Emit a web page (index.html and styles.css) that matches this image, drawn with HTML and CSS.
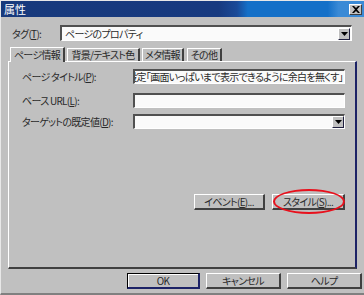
FILE: index.html
```html
<!DOCTYPE html>
<html lang="ja">
<head>
<meta charset="utf-8">
<link rel="stylesheet" href="styles.css">
</head>
<body>
<div class="window">
  <div class="titlebar">
    <span class="title">属性</span>
    <span class="close"><svg width="8" height="7" viewBox="0 0 8 7"><path d="M0 0h2l2 2 2-2h2L5 3.5 8 7H6L4 5 2 7H0l3-3.5z" fill="#000"/></svg></span>
  </div>
  <div class="tagrow">
    <span class="label">タグ(<u>T</u>):</span>
    <div class="select wide">
      <span class="val">ページのプロパティ</span>
      <span class="arrow"><svg width="7" height="4" viewBox="0 0 7 4"><path d="M0 0h7L3.5 4z" fill="#000"/></svg></span>
    </div>
  </div>
  <div class="tabs">
    <span class="tab active t1">ページ情報</span>
    <span class="tab t2">背景/テキスト色</span>
    <span class="tab t3">メタ情報</span>
    <span class="tab t4">その他</span>
  </div>
  <div class="panel">
    <div class="row">
      <span class="flabel">ページ タイトル(<u>P</u>):</span>
      <div class="field scroll"><span>設定「画面いっぱいまで表示できるように余白を無くす」</span></div>
    </div>
    <div class="row r2">
      <span class="flabel">ベース URL(<u>L</u>):</span>
      <div class="field"></div>
    </div>
    <div class="row r3">
      <span class="flabel">ターゲットの既定値(<u>D</u>):</span>
      <div class="select field">
        <span class="val"></span>
        <span class="arrow"><svg width="7" height="4" viewBox="0 0 7 4"><path d="M0 0h7L3.5 4z" fill="#000"/></svg></span>
      </div>
    </div>
    <div class="panelbtns">
      <span class="btn ev">イベント(<u>E</u>)...</span>
      <span class="btn st">スタイル(<u>S</u>)...<span class="ring"></span></span>
    </div>
  </div>
  <div class="footer">
    <span class="btn def">OK</span>
    <span class="btn fb">キャンセル</span>
    <span class="btn fb">ヘルプ</span>
  </div>
</div>
</body>
</html>
```
FILE: styles.css
```css
* { box-sizing: border-box; }
html, body { margin: 0; padding: 0; }
body {
  width: 364px;
  height: 295px;
  background: #c0c0c0;
  font-family: "Noto Sans CJK JP", "Noto Sans", sans-serif;
  font-size: 10px;
  letter-spacing: -0.7px;
  font-feature-settings: "palt";
  color: #2a2a2a;
  overflow: hidden;
}
u { text-decoration: underline; text-underline-offset: 1px; }
.window {
  width: 364px;
  height: 295px;
  border-top: 1px solid #e8e8e8;
  border-left: 1px solid #e8e8e8;
  border-bottom: 2px solid #808080;
  position: relative;
}
.titlebar {
  height: 16px;
  display: flex;
  align-items: center;
  justify-content: space-between;
  padding: 0 2px 0 3px;
  background: linear-gradient(to right, #183a7c 0%, #173a80 60%, #1a4a98 65%, #1470c8 68%, #1470c8 90%, #3a8ad6 93%, #3a8ad6 100%);
  color: #fff;
}
.title { font-size: 11px; line-height: 16px; letter-spacing: 0; }
.close {
  width: 13px;
  height: 11px;
  background: #c0c0c0;
  border-top: 1px solid #fff;
  border-left: 1px solid #fff;
  border-right: 1px solid #404040;
  border-bottom: 1px solid #404040;
  display: flex;
  align-items: center;
  justify-content: center;
}
.tagrow {
  margin-top: 8px;
  padding-left: 11px;
  display: flex;
  align-items: center;
  height: 16px;
}
.label { width: 48px; }
.select {
  display: flex;
  align-items: center;
  justify-content: space-between;
  background: #fafafa;
  border-top: 2px solid #505050;
  border-left: 2px solid #505050;
  border-right: 1px solid #fff;
  border-bottom: 1px solid #fff;
}
.select.wide { width: 292px; height: 16px; }
.select .val { padding-left: 3px; line-height: 12px; }
.arrow {
  width: 12px;
  height: 12px;
  background: #c0c0c0;
  border-top: 1px solid #fff;
  border-left: 1px solid #fff;
  border-right: 1px solid #202040;
  border-bottom: 1px solid #202040;
  display: flex;
  align-items: center;
  justify-content: center;
  margin-right: 1px;
}
.tabs {
  margin-top: 7px;
  padding-left: 9px;
  height: 13px;
  display: flex;
  align-items: flex-end;
  position: relative;
  z-index: 2;
}
.tab {
  height: 13px;
  line-height: 11px;
  border-top: 1px solid #fff;
  border-left: 1px solid #fff;
  border-right: 2px solid #404040;
  text-align: center;
  margin-right: 2px;
  white-space: nowrap;
}
.tab.active {
  height: 15px;
  margin-bottom: -1px;
  background: #c0c0c0;
  line-height: 14px;
}
.t1 { width: 55px; }
.t2 { width: 73px; }
.t3 { width: 42px; margin-right: 3px; }
.t4 { width: 35px; }
.panel {
  margin-left: 7px;
  width: 349px;
  height: 208px;
  border-top: 1px solid #fff;
  border-left: 1px solid #fff;
  border-right: 2px solid #1c2266;
  border-bottom: 2px solid #404040;
  padding: 7px 10px 0 13px;
  position: relative;
}
.row {
  display: flex;
  align-items: center;
  justify-content: space-between;
  height: 15px;
}
.r2 { margin-top: 9px; }
.r3 { margin-top: 6px; }
.flabel { white-space: nowrap; }
.field {
  width: 212px;
  height: 15px;
  background: #fafafa;
  border-top: 2px solid #505050;
  border-left: 2px solid #505050;
  border-right: 1px solid #fff;
  border-bottom: 1px solid #fff;
}
.field.scroll {
  display: flex;
  justify-content: flex-end;
  overflow: hidden;
  white-space: nowrap;
  line-height: 12px;
  padding-right: 1px;
}
.field.select .arrow { width: 12px; height: 12px; margin-right: 0; }
.panelbtns {
  margin-top: 65px;
  display: flex;
  justify-content: flex-end;
  gap: 7px;
}
.btn {
  height: 16px;
  display: flex;
  align-items: center;
  justify-content: center;
  background: #c0c0c0;
  border-top: 1px solid #fff;
  border-left: 1px solid #fff;
  border-right: 2px solid #404040;
  border-bottom: 2px solid #404040;
  white-space: nowrap;
  position: relative;
}
.ev { width: 71px; }
.st { width: 73px; }
.ring {
  position: absolute;
  left: 0px;
  top: -6px;
  width: 72px;
  height: 25px;
  border: 2px solid #e8101c;
  border-radius: 50%;
}
.footer {
  margin-top: 4px;
  padding-left: 126px;
  display: flex;
  gap: 6px;
}
.footer .btn { width: 73px; }
.footer .def {
  width: 73px;
  border: 1px solid #000;
  border-bottom: 2px solid #1c2266;
  border-right: 2px solid #1c2266;
  box-shadow: inset 1px 1px 0 #fff;
}
.footer .fb { width: 75px; }
```
